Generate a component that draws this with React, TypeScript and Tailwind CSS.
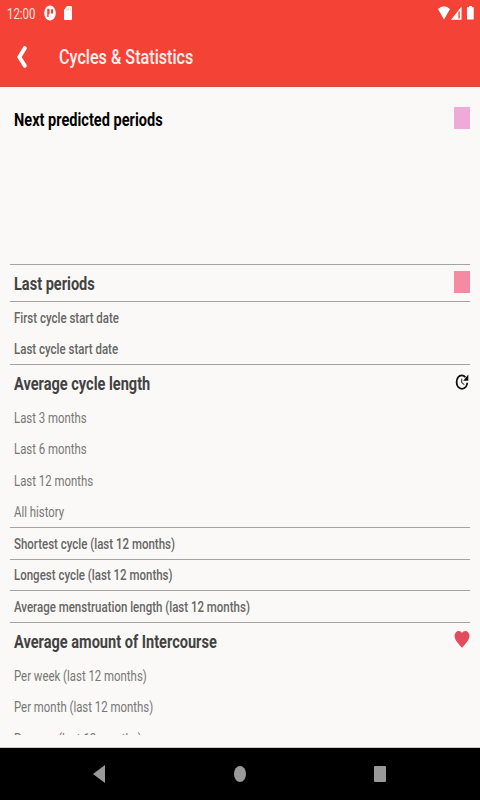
import type { ReactNode } from "react";

function Label({ children, className }: { children: ReactNode; className: string }) {
  return <span className={`block origin-left whitespace-nowrap ${className}`}>{children}</span>;
}

function Heading({ text, icon, first }: { text: string; icon: ReactNode; first?: boolean }) {
  return (
    <div className="flex h-full items-start justify-between pl-1">
      <Label className={`scale-x-[0.766] text-[19px] leading-6 font-bold ${first ? "mt-[8px] text-black" : "mt-[7px] text-[#424242]"}`}>{text}</Label>
      <div className={`h-[22px] w-4 shrink-0 ${first ? "mt-[7.4px]" : "mt-[6px]"}`}>{icon}</div>
    </div>
  );
}

function Row({ text, bold, line }: { text: string; bold?: boolean; line?: boolean }) {
  return (
    <div className={`flex h-[31.5px] shrink-0 items-center pl-1 ${line ? "border-b border-[#a3a3a1]" : ""}`}>
      <Label className={`text-[15px] leading-5 ${bold ? "mt-px scale-x-[0.766] font-medium text-[#666664]" : "scale-x-[0.76] font-normal text-[#777775]"}`}>{text}</Label>
    </div>
  );
}

function StatusBar() {
  return (
    <div className="flex h-[26px] items-center justify-between pr-[6px] pl-[7px] text-white">
      <div className="flex items-center">
        <div className="w-[37px]">
          <Label className="mt-px scale-x-[0.76] text-[15px] leading-5 text-[#ffe3df]">12:00</Label>
        </div>
        <svg className="h-[16px] w-3" viewBox="0 0 12 16">
          <ellipse cx="6" cy="8" rx="5.8" ry="7.6" fill="#fff" />
          <path d="M3.2 3.8H5.6V9.2H4.6V12H3.2ZM7 4.2H9V8.4H7Z" fill="#f44336" />
        </svg>
        <svg className="ml-[8px] h-[14px] w-2" viewBox="0 0 8 14">
          <path d="M3 0H7Q8 0 8 1.2V12.8Q8 14 7 14H1Q0 14 0 12.8V4Z" fill="#fff" />
          <path d="M3 2.2V4.6M4.6 2.2V4.6M6.2 2.2V4.6" stroke="#f9aaa3" strokeWidth=".6" />
        </svg>
      </div>
      <svg className="h-4 w-9" viewBox="0 0 36 16">
        <path d="M0 4Q6 -1.5 12 4L6 14.5Z" fill="#fff" />
        <path d="M23.5 1.5V14.8H13Z" fill="#fff" />
        <path d="M20.4 6.5H21.8V13.5H20.4Z" fill="#f44336" />
        <path d="M31 1H34V2.3H35.7V14.6H29V2.3H31Z" fill="#fff" />
      </svg>
    </div>
  );
}

function HistoryIcon() {
  return (
    <svg className="h-[22px] w-4" viewBox="0 0 16 22">
      <path d="M11.4 6.2C9.6 3.8 6 3.6 4.1 6.2C2 9 2.2 13.6 4.2 16C6.2 18.4 9.8 18.4 11.7 16C12.7 14.8 13.2 13.4 13.3 11.8" fill="none" stroke="#111" strokeWidth="1.8" />
      <path d="M14.3 3.4V9.8H9.2Z" fill="#111" />
      <path d="M7.7 7.8V11.6L10.3 13.6" fill="none" stroke="#333" strokeWidth="1.1" />
    </svg>
  );
}

function HeartIcon() {
  return (
    <svg className="h-[22px] w-4" viewBox="1.2 .8 21.6 24" preserveAspectRatio="none">
      <path
        fill="#e24c5c"
        d="M12 21.35l-1.45-1.32C5.4 15.36 2 12.28 2 8.5 2 5.42 4.42 3 7.5 3c1.74 0 3.41.81 4.5 2.09C13.09 3.81 14.76 3 16.5 3 19.58 3 22 5.42 22 8.5c0 3.78-3.4 6.86-8.55 11.54L12 21.35z"
      />
    </svg>
  );
}

export default function App() {
  return (
    <div className="flex h-[800px] w-[480px] flex-col overflow-hidden bg-[#faf9f8] font-['Roboto','Liberation_Sans',sans-serif]">
      <header className="h-[87px] shrink-0 border-b border-[#d9493f] bg-[#f44336]">
        <StatusBar />
        <div className="flex h-[62px] items-center pl-4">
          <svg className="h-6 w-3" viewBox="0 0 12 24">
            <path d="M8.8 3.2L3.4 12L8.8 20.8" fill="none" stroke="#fff" strokeWidth="4" strokeLinecap="round" />
          </svg>
          <Label className="ml-[31px] scale-x-[0.767] text-[21.1px] leading-7 font-medium text-[#fff1ef]">Cycles &amp; Statistics</Label>
        </div>
      </header>
      <main className="mx-[10px] mt-[13px] flex h-[635px] shrink-0 flex-col overflow-hidden">
        <section className="h-[164.5px] shrink-0 border-b border-[#a3a3a1]">
          <Heading first text="Next predicted periods" icon={<div className="h-full bg-[#efaad8]" />} />
        </section>
        <section className="h-[37px] shrink-0 border-b border-[#a3a3a1]">
          <Heading text="Last periods" icon={<div className="h-full bg-[#f48ba3]" />} />
        </section>
        <Row bold text="First cycle start date" />
        <Row bold line text="Last cycle start date" />
        <section className="h-[37.5px] shrink-0">
          <Heading text="Average cycle length" icon={<HistoryIcon />} />
        </section>
        <Row text="Last 3 months" />
        <Row text="Last 6 months" />
        <Row text="Last 12 months" />
        <Row line text="All history" />
        <Row bold line text="Shortest cycle (last 12 months)" />
        <Row bold line text="Longest cycle (last 12 months)" />
        <Row bold line text="Average menstruation length (last 12 months)" />
        <section className="h-[37.5px] shrink-0">
          <Heading text="Average amount of Intercourse" icon={<HeartIcon />} />
        </section>
        <Row text="Per week (last 12 months)" />
        <Row text="Per month (last 12 months)" />
        <Row text="Per year (last 12 months)" />
      </main>
      <nav className="mt-auto flex h-[53px] shrink-0 items-center border-t border-[#c8c8c6] bg-black">
        <svg className="ml-[93px] h-[18px] w-3" viewBox="0 0 12 18">
          <path d="M12 0V18L0 9Z" fill="#999" />
        </svg>
        <div className="ml-[129px] h-4 w-3 rounded-[50%] bg-[#999]" />
        <div className="ml-32 h-4 w-3 rounded-[1px] bg-[#999]" />
      </nav>
    </div>
  );
}
